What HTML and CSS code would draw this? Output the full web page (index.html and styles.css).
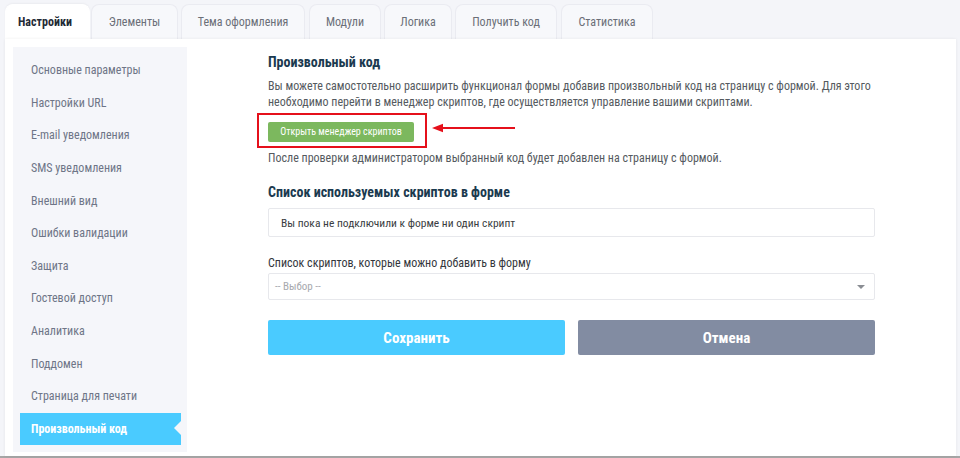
FILE: index.html
```html
<!DOCTYPE html>
<html lang="ru">
<head>
<meta charset="utf-8">
<title>Произвольный код</title>
<link rel="stylesheet" href="styles.css">
</head>
<body>
<div class="page">
  <nav class="tabs">
    <div class="tab active">Настройки</div>
    <div class="tab t2">Элементы</div>
    <div class="tab t3">Тема оформления</div>
    <div class="tab t4">Модули</div>
    <div class="tab t5">Логика</div>
    <div class="tab t6">Получить код</div>
    <div class="tab t7">Статистика</div>
  </nav>
  <div class="panel">
    <aside class="sidebar">
      <div class="item">Основные параметры</div>
      <div class="item">Настройки URL</div>
      <div class="item">E-mail уведомления</div>
      <div class="item">SMS уведомления</div>
      <div class="item">Внешний вид</div>
      <div class="item">Ошибки валидации</div>
      <div class="item">Защита</div>
      <div class="item">Гостевой доступ</div>
      <div class="item">Аналитика</div>
      <div class="item">Поддомен</div>
      <div class="item">Страница для печати</div>
      <div class="item active">Произвольный код</div>
    </aside>
    <main class="main">
      <div class="content">
        <h2 class="title">Произвольный код</h2>
        <p class="text">Вы можете самостотельно расширить функционал формы добавив произвольный код на страницу с формой. Для этого необходимо перейти в менеджер скриптов, где осуществляется управление вашими скриптами.</p>
        <div class="action-row">
          <div class="highlight">
            <button class="btn-green">Открыть менеджер скриптов</button>
          </div>
          <svg class="arrow" width="84" height="10" viewBox="0 0 84 10">
            <line x1="8" y1="5" x2="83" y2="5" stroke="#e5101b" stroke-width="2"/>
            <polygon points="0,5 11,0.8 11,9.2" fill="#e5101b"/>
          </svg>
        </div>
        <p class="text after">После проверки администратором выбранный код будет добавлен на страницу с формой.</p>
        <h2 class="title second">Список используемых скриптов в форме</h2>
        <div class="box">Вы пока не подключили к форме ни один скрипт</div>
        <div class="label">Список скриптов, которые можно добавить в форму</div>
        <div class="select">
          <span class="placeholder">-- Выбор --</span>
          <span class="caret"></span>
        </div>
        <div class="buttons">
          <button class="btn save">Сохранить</button>
          <button class="btn cancel">Отмена</button>
        </div>
      </div>
    </main>
  </div>
</div>
</body>
</html>
```
FILE: styles.css
```css
* { box-sizing: border-box; }
html, body { margin: 0; padding: 0; }
body {
  background: #f4f5f9;
  font-family: Roboto, "Liberation Sans", Arial, sans-serif;
  font-stretch: 82%;
  width: 960px;
  height: 458px;
  overflow: hidden;
}
button { font-stretch: 82%; }
.page {
  height: 458px;
  padding: 4px 4px 0 5px;
  border-bottom: 2px solid #a6a6a6;
  display: flex;
  flex-direction: column;
}
.tabs {
  display: flex;
  gap: 3px;
  height: 35px;
}
.tab {
  flex: none;
  height: 35px;
  display: flex;
  align-items: center;
  justify-content: center;
  font-size: 12px;
  color: #6b6f78;
  background: #f7f8fb;
  border: 1px solid #eaebf1;
  border-bottom: none;
  border-radius: 8px 8px 0 0;
}
.tab.active {
  width: 85px;
  margin-right: -2px;
  justify-content: flex-start;
  padding-left: 12px;
  background: #fff;
  color: #1f2a36;
  font-weight: 700;
  border-color: #fff;
  box-shadow: 0 -1px 2px rgba(0,0,0,0.04);
}
.t2 { width: 87px; }
.t3 { width: 124px; }
.t4 { width: 72px; margin-left: 1px; }
.t5 { width: 68px; }
.t6 { width: 102px; }
.t7 { width: 92px; margin-left: 1px; }
.panel {
  flex: 1;
  background: #fff;
  display: flex;
  padding: 8px 0 4px 8px;
  box-shadow: 0 0 3px rgba(0,0,0,0.07);
}
.sidebar {
  width: 174px;
  background: #f5f6fa;
  padding: 7px 6px 7px 7px;
}
.item {
  height: 32.6px;
  display: flex;
  align-items: center;
  padding-left: 11px;
  font-size: 12px;
  color: #6e7587;
  position: relative;
}
.item.active {
  background: #4acbff;
  color: #fff;
  font-weight: 700;
}
.item.active::after {
  content: "";
  position: absolute;
  right: 0;
  top: 50%;
  margin-top: -7.5px;
  border-top: 7.5px solid transparent;
  border-bottom: 7.5px solid transparent;
  border-right: 7px solid #f5f6fa;
}
.main {
  flex: 1;
  display: flex;
  justify-content: center;
}
.content {
  width: 607px;
  padding-top: 6.5px;
}
.title {
  margin: 0;
  font-size: 14px;
  line-height: 17px;
  font-weight: 700;
  color: #1b3a4f;
}
.text {
  margin: 7.5px 0 0;
  font-size: 12px;
  line-height: 16px;
  color: #555a60;
}
.action-row {
  display: flex;
  align-items: flex-start;
  margin-top: 3px;
}
.highlight {
  margin-left: -11px;
  width: 170px;
  height: 35px;
  border: 2px solid #e5101b;
  padding: 5px 0 0 9px;
}
.btn-green {
  width: 146px;
  height: 20px;
  border: none;
  border-radius: 2px;
  background: #7cb85e;
  color: #fff;
  font-family: inherit;
  font-size: 10px;
  white-space: nowrap;
  padding: 0;
}
.arrow {
  margin-left: 5px;
  margin-top: 10px;
}
.text.after { margin-top: 2px; }
.title.second { margin-top: 17.5px; }
.box {
  margin-top: 7.5px;
  height: 29px;
  border: 1px solid #e7e8ec;
  border-radius: 2px;
  padding-left: 12px;
  display: flex;
  align-items: center;
  font-size: 11.5px;
  color: #3a3d42;
}
.label {
  margin-top: 18.5px;
  font-size: 12px;
  line-height: 15px;
  color: #34373c;
}
.select {
  margin-top: 2.5px;
  height: 27px;
  border: 1px solid #e7e8ec;
  border-radius: 2px;
  padding: 0 9px 0 6px;
  display: flex;
  align-items: center;
  justify-content: space-between;
}
.placeholder {
  font-size: 11px;
  color: #a7a9ae;
}
.caret {
  width: 0;
  height: 0;
  border-left: 4px solid transparent;
  border-right: 4px solid transparent;
  border-top: 4px solid #8a8d93;
}
.buttons {
  margin-top: 20px;
  display: flex;
  gap: 13px;
}
.btn {
  flex: 1;
  height: 35px;
  border: none;
  border-radius: 2px;
  color: #fff;
  font-family: inherit;
  font-size: 15px;
  font-weight: 700;
}
.save { background: #4acbff; }
.cancel { background: #828ca2; }
```
